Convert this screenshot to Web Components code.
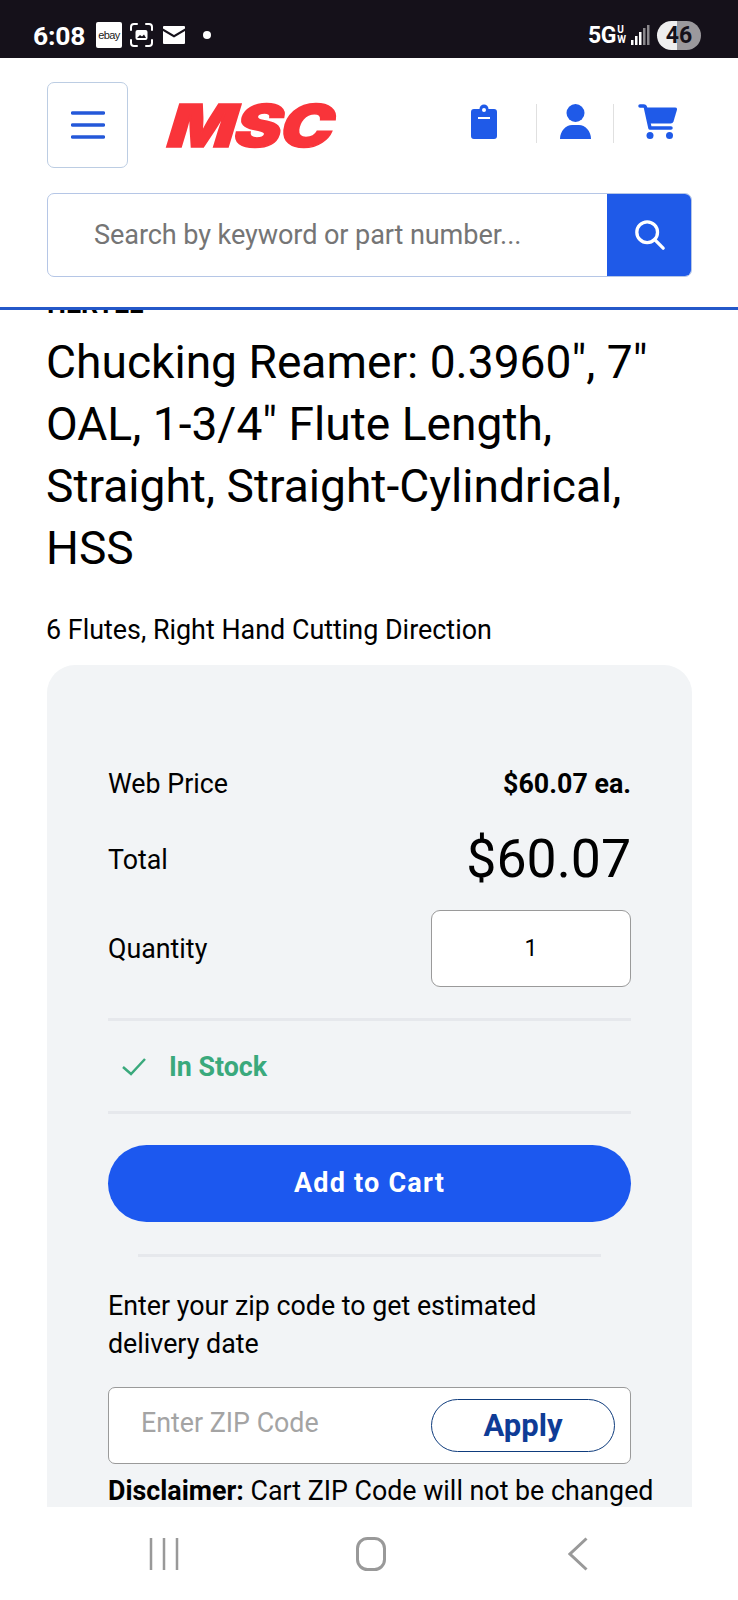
<!DOCTYPE html>
<html lang="en">
<head>
<meta charset="utf-8">
<title>Chucking Reamer</title>
<style>
  html, body { margin: 0; height: 100%; }
  body { font-family: Roboto, "Liberation Sans", sans-serif; background: #fff; color: #000; }
</style>
</head>
<body>
<phone-page>
  <status-bar slot="status"></status-bar>
  <site-header slot="header"></site-header>
  <product-title brand="HERTEL">
    Chucking Reamer: 0.3960", 7" OAL, 1-3/4" Flute Length, Straight, Straight-Cylindrical, HSS
    <span slot="sub">6 Flutes, Right Hand Cutting Direction</span>
  </product-title>
  <price-card></price-card>
  <nav-bar slot="nav"></nav-bar>
</phone-page>

<script>
class PhonePage extends HTMLElement {
  connectedCallback() {
    this.attachShadow({ mode: "open" });
    this.shadowRoot.innerHTML = `
      <style>
        :host { display: flex; flex-direction: column; height: 1600px; overflow: hidden; }
        main { flex: 1; min-height: 0; overflow: hidden; padding: 0 46px 0 47px; }
      </style>
      <slot name="status"></slot>
      <slot name="header"></slot>
      <main><slot></slot></main>
      <slot name="nav"></slot>
    `;
  }
}

class StatusBar extends HTMLElement {
  connectedCallback() {
    this.attachShadow({ mode: "open" });
    this.shadowRoot.innerHTML = `
      <style>
        :host { display: flex; align-items: center; height: 58px; padding: 12px 37px 0 33px; background: #15111a; color: #fff; box-sizing: border-box; font-family: Roboto, sans-serif; }
        .time { font-size: 26.500px; font-weight: 700; width: 63px; letter-spacing: -.2px; }
        .ebay { width: 26px; height: 26px; background: #fff; border-radius: 2px; color: #222; font: 400 11px/26px "Liberation Sans", sans-serif; letter-spacing: -.6px; text-align: center; overflow: hidden; }
        .cap { margin-left: 7px; }
        .mail { margin-left: 9px; }
        .dot { width: 8px; height: 8px; border-radius: 50%; background: #fff; margin-left: 18px; }
        .spacer { flex: 1; }
        .net { font-size: 23px; font-weight: 700; letter-spacing: -.3px; }
        .uw { display: flex; flex-direction: column; font-size: 10px; font-weight: 700; line-height: 10px; margin: 0 5px 0 1px; }
        .signal { margin-right: 7px; }
        .battery { width: 44px; height: 29px; border-radius: 15px; background: linear-gradient(90deg, #eeeeef 0 20px, #9b999d 20px); color: #15111a; font-size: 23px; font-weight: 700; line-height: 29px; text-align: center; }
      </style>
      <span class="time">6:08</span>
      <span class="ebay">ebay</span>
      <svg class="cap" width="25" height="24" viewBox="0 0 25 24" fill="none" stroke="#fff" stroke-width="2" stroke-linecap="round">
        <path d="M2 7V4a3 3 0 0 1 3-3h3M17 1h3a3 3 0 0 1 3 3v3M23 17v3a3 3 0 0 1-3 3h-3M8 23H5a3 3 0 0 1-3-3v-3"/>
        <rect x="6.500" y="7" width="12" height="10" rx="2" fill="#fff" stroke="none"/>
        <path d="M8 15l3-3 2 1.500 2-2 2 3.500z" fill="#15111a" stroke="none"/>
      </svg>
      <svg class="mail" width="22" height="18" viewBox="0 0 22 18">
        <path d="M1 0h20a1 1 0 0 1 1 1v1.500L11 9 0 2.500V1a1 1 0 0 1 1-1z" fill="#fff"/>
        <path d="M0 5l11 6.500L22 5v12a1 1 0 0 1-1 1H1a1 1 0 0 1-1-1z" fill="#fff"/>
      </svg>
      <span class="dot"></span>
      <span class="spacer"></span>
      <span class="net">5G</span>
      <span class="uw"><span>U</span><span>W</span></span>
      <svg class="signal" width="19" height="20" viewBox="0 0 19 20">
        <rect x="0" y="15" width="2.500" height="5" fill="#fff"/>
        <rect x="4" y="11" width="2.500" height="9" fill="#fff"/>
        <rect x="8" y="7" width="2.500" height="13" fill="#fff"/>
        <rect x="12" y="3" width="2.500" height="17" fill="#8a888c"/>
        <rect x="16" y="0" width="2.500" height="20" fill="#8a888c"/>
      </svg>
      <span class="battery">46</span>
    `;
  }
}

class SiteHeader extends HTMLElement {
  connectedCallback() {
    this.attachShadow({ mode: "open" });
    this.shadowRoot.innerHTML = `
      <style>
        :host { display: block; padding: 24px 46px 30px 47px; background: #fff; border-bottom: 3px solid #2458c9; }
        .top { display: flex; align-items: center; height: 86px; }
        .menu { width: 81px; height: 86px; box-sizing: border-box; border: 1.500px solid #bccde3; border-radius: 7px; display: flex; align-items: center; justify-content: center; background: #fff; padding: 0; }
        /* real text, stretched and thickened towards the wordmark */
        .logo { margin-left: 41px; margin-top: 1px; color: #f9343a; font: italic 900 59px/46px Inter, sans-serif; letter-spacing: -1px; transform: scaleX(1.2) skewX(-5deg); transform-origin: left center; -webkit-text-stroke: 1.500px #f9343a; }
        .tools { margin-left: auto; display: flex; align-items: center; margin-top: -4px; }
        .tools span { display: flex; height: 39px; align-items: flex-start; }
        .clip { width: 65px; border-right: 1px solid #e0e0e0; }
        .person { width: 76px; border-right: 1px solid #e0e0e0; justify-content: center; }
        .cart { width: 78px; justify-content: flex-end; padding-right: 15px; box-sizing: border-box; }
        .search { display: flex; height: 84px; margin-top: 25px; border: 1px solid #b5c6e6; border-radius: 7px; overflow: hidden; box-sizing: border-box; }
        .field { flex: 1; padding-left: 46px; font-size: 27.100px; line-height: 82px; color: #757575; letter-spacing: -.1px; }
        .go { width: 85px; background: #1f5ae8; display: flex; align-items: center; justify-content: center; margin: -1px; }
      </style>
      <div class="top">
        <button class="menu" aria-label="Menu">
          <svg width="34" height="28" viewBox="0 0 34 28" stroke="#2458d9" stroke-width="3.500" stroke-linecap="round">
            <path d="M1.500 2h31M1.500 14h31M1.500 26h31"/>
          </svg>
        </button>
        <span class="logo">MSC</span>
        <div class="tools">
          <span class="clip">
            <svg width="26" height="35" viewBox="0 0 26 35">
              <path d="M3 5h5.500a4.500 4.500 0 0 1 9 0H23a3 3 0 0 1 3 3v24a3 3 0 0 1-3 3H3a3 3 0 0 1-3-3V8a3 3 0 0 1 3-3z" fill="#1f5ae8"/>
              <circle cx="13" cy="6" r="2" fill="#fff"/>
              <rect x="7" y="13" width="12" height="2" fill="#fff"/>
            </svg>
          </span>
          <span class="person">
            <svg width="31" height="35" viewBox="0 0 31 35" fill="#1f5ae8">
              <circle cx="15.500" cy="9" r="9"/>
              <path d="M0 35c0-8 6-14 12-14h7c6 0 12 6 12 14z"/>
            </svg>
          </span>
          <span class="cart">
            <svg width="39" height="36" viewBox="0 0 39 36" fill="#1f5ae8">
              <path d="M2 2h3.500a2 2 0 0 1 2 1.600l4.500 20.400h21" fill="none" stroke="#1f5ae8" stroke-width="3.500" stroke-linecap="round" stroke-linejoin="round"/>
              <path d="M8 3.500h29a2 2 0 0 1 1.900 2.500l-3.400 11.500a3 3 0 0 1-2.800 2H11.500z"/>
              <circle cx="12" cy="31.500" r="3.500"/>
              <circle cx="31.500" cy="31.500" r="3.500"/>
            </svg>
          </span>
        </div>
      </div>
      <div class="search">
        <span class="field">Search by keyword or part number...</span>
        <span class="go">
          <svg width="32" height="34" viewBox="0 0 34 34" fill="none" stroke="#fff" stroke-width="3.500" stroke-linecap="round">
            <circle cx="14" cy="14" r="11"/>
            <path d="M22 22l9 9"/>
          </svg>
        </span>
      </div>
    `;
  }
}

class ProductTitle extends HTMLElement {
  connectedCallback() {
    this.attachShadow({ mode: "open" });
    this.shadowRoot.innerHTML = `
      <style>
        :host { display: block; }
        .brand { font-size: 26.800px; font-weight: 700; line-height: 28px; margin-top: -20px; height: 28px; }
        h1 { margin: 13px 0 0 -1px; font-size: 46.150px; font-weight: 400; line-height: 62px; }
        .sub { margin: 33px 0 17px -1px; font-size: 26.900px; line-height: 36px; }
      </style>
      <div class="brand">${this.getAttribute("brand")}</div>
      <h1><slot></slot></h1>
      <div class="sub"><slot name="sub"></slot></div>
    `;
  }
}

class PriceCard extends HTMLElement {
  connectedCallback() {
    this.attachShadow({ mode: "open" });
    this.shadowRoot.innerHTML = `
      <style>
        :host { display: block; background: #f2f4f6; border-radius: 28px 28px 0 0; padding: 100px 61px 40px; font-size: 26.800px; }
        .row { display: flex; align-items: center; justify-content: space-between; }
        .web { height: 36px; padding-top: 1px; }
        .web b { font-weight: 700; }
        .total { height: 66px; margin-top: 25px; }
        .total strong { font-size: 53.600px; font-weight: 400; margin-top: -4px; }
        .qty { height: 77px; margin-top: 17px; }
        .qty span.box { width: 200px; height: 77px; box-sizing: border-box; border: 1px solid #9a9a9a; border-radius: 9px; background: #fff; display: flex; align-items: center; justify-content: center; font-size: 23px; }
        hr { border: 0; height: 3px; background: #e6e8ec; margin: 0; }
        .hr1 { margin-top: 31px; }
        .stock { display: flex; align-items: center; height: 90px; padding: 1px 0 0 14px; box-sizing: border-box; gap: 23px; color: #3aa97c; font-weight: 700; font-size: 26.800px; }
        .add { display: block; width: 100%; height: 77px; margin-top: 31px; border: 0; border-radius: 39px; background: #1c58ef; color: #fff; font: 700 27px/77px Roboto, sans-serif; letter-spacing: 1.200px; padding: 0; }
        .hr3 { margin: 32px 30px 0; }
        p { margin: 30px 0 0; line-height: 38px; font-size: 26.800px; }
        .zip { display: flex; align-items: center; height: 77px; margin-top: 24px; box-sizing: border-box; border: 1px solid #9a9a9a; border-radius: 7px; background: #fff; padding: 0 15px 0 32px; }
        .zip span { flex: 1; color: #a4a4a4; margin-top: -5px; }
        .zip button { width: 184px; height: 53px; border: 1px solid #0f3c7d; border-radius: 27px; background: #fff; color: #0f3c96; font: 700 31px Roboto, sans-serif; padding: 0; }
        .note { margin-top: 8px; line-height: 38px; white-space: nowrap; }
        .note b { font-weight: 700; }
      </style>
      <div class="row web"><span>Web Price</span><b>$60.07 ea.</b></div>
      <div class="row total"><span>Total</span><strong>$60.07</strong></div>
      <div class="row qty"><span>Quantity</span><span class="box">1</span></div>
      <hr class="hr1">
      <div class="stock">
        <svg width="24" height="18" viewBox="0 0 24 18" fill="none" stroke="#3aa97c" stroke-width="2.500">
          <path d="M1 9l8 7L23 1"/>
        </svg>
        <span>In Stock</span>
      </div>
      <hr>
      <button class="add">Add to Cart</button>
      <hr class="hr3">
      <p>Enter your zip code to get estimated delivery date</p>
      <div class="zip"><span>Enter ZIP Code</span><button>Apply</button></div>
      <div class="note"><b>Disclaimer:</b> Cart ZIP Code will not be changed</div>
    `;
  }
}

class NavBar extends HTMLElement {
  connectedCallback() {
    this.attachShadow({ mode: "open" });
    this.shadowRoot.innerHTML = `
      <style>
        :host { display: grid; grid-template-columns: 1fr 1fr 1fr; height: 93px; background: #fff; padding: 0 57px 0 61px; box-sizing: border-box; }
        span { display: flex; align-items: flex-start; justify-content: center; padding-top: 30px; }
      </style>
      <span>
        <svg width="30" height="34" viewBox="0 0 30 34" stroke="#999" stroke-width="2.500"><path d="M2 1v32M15 1v32M28 1v32"/></svg>
      </span>
      <span>
        <svg width="30" height="34" viewBox="0 0 30 34" fill="none" stroke="#999" stroke-width="3"><rect x="1.500" y="1.500" width="27" height="31" rx="10"/></svg>
      </span>
      <span>
        <svg width="20" height="34" viewBox="0 0 20 34" fill="none" stroke="#999" stroke-width="3"><path d="M18.500 1.500L2 17l16.500 15.500"/></svg>
      </span>
    `;
  }
}

customElements.define("phone-page", PhonePage);
customElements.define("status-bar", StatusBar);
customElements.define("site-header", SiteHeader);
customElements.define("product-title", ProductTitle);
customElements.define("price-card", PriceCard);
customElements.define("nav-bar", NavBar);
</script>
</body>
</html>
